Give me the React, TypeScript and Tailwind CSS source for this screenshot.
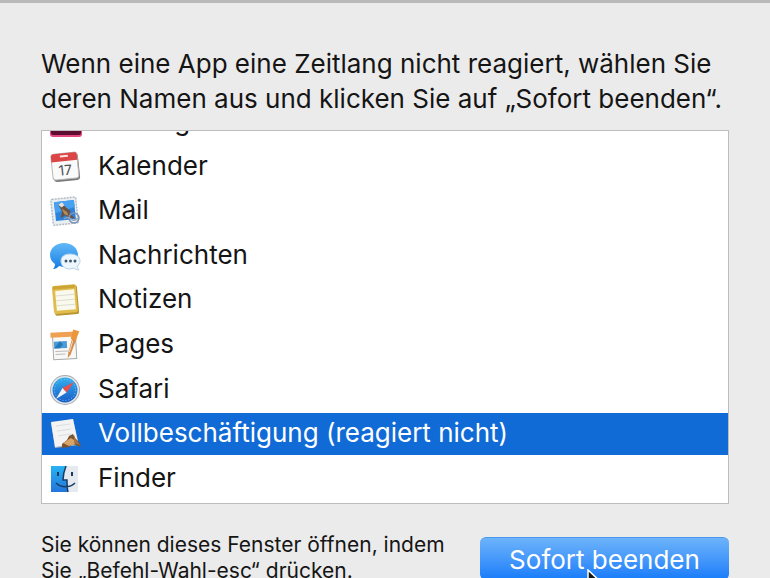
import { useState } from "react";
import type { ReactNode } from "react";

function InDesignIcon() {
  return (
    <svg viewBox="0 0 32 32" className="size-8" aria-hidden="true">
      <rect x="0" y="1" width="32" height="30" rx="3" fill="#e2487f" />
      <rect x="1" y="2" width="30" height="27" rx="2" fill="#5d0b30" />
    </svg>
  );
}

function CalendarIcon() {
  return (
    <svg viewBox="0 0 32 32" className="size-8" aria-hidden="true">
      <g transform="rotate(-6 16 16)">
        <rect x="3" y="3" width="26" height="27" rx="3" fill="#77777a" />
        <rect x="2" y="2" width="26" height="26" rx="3" fill="#fafafa" stroke="#b9b6b6" />
        <path d="M2 10V5q0-3 3-3h20q3 0 3 3v5z" fill="#dc4545" />
        <path d="M11 5h8" stroke="#ffe2df" strokeWidth="2" />
        <text x="15" y="24" textAnchor="middle" fontSize="14" fill="#4d4d52" fontFamily="Inter, sans-serif">17</text>
      </g>
    </svg>
  );
}

function MailIcon() {
  return (
    <svg viewBox="0 0 32 32" className="size-8" aria-hidden="true">
      <g transform="rotate(-6 16 16)">
        <rect x="2" y="3" width="25" height="26" rx="1" fill="#e9eef2" stroke="#b3bcc5" strokeWidth="1.500" strokeDasharray="2 1" />
        <rect x="5" y="6" width="20" height="19" fill="#2c83dc" />
        <path d="M5 6h20v7L5 17z" fill="#46a2f0" />
        <path d="M9 9l4-1 3 4 5 5-2 1 5 6h-5l-4-4-5 3 2-7z" fill="#6b513f" />
        <path d="M9 9l4-2 2 3-3 2z" fill="#e6e3dc" />
        <path d="M12 13l5 4 1 4-4-2z" fill="#b28a5b" />
      </g>
      <circle cx="24" cy="23" r="5" fill="none" stroke="#7b92b2" strokeWidth="1.500" />
      <path d="M14 24q4-3 7 0t7-1" fill="none" stroke="#8fa5c1" strokeWidth="1.500" />
    </svg>
  );
}

function MessagesIcon() {
  return (
    <svg viewBox="0 0 32 32" className="size-8" aria-hidden="true">
      <defs>
        <linearGradient id="bubble" x1="0" y1="0" x2="0" y2="1">
          <stop stopColor="#62b9f7" />
          <stop offset="1" stopColor="#147de4" />
        </linearGradient>
      </defs>
      <path d="M14 3C6 3 0 8 0 15c0 4 2 7 5 9 0 2-1 4-2 5 3 0 5-2 6-3l5 1c8 0 14-5 14-12S22 3 14 3z" fill="url(#bubble)" />
      <path d="M20 14c-6 0-9 3-9 7s3 8 9 8l4-1c1 1 3 2 5 2-1-1-2-3-2-4 2-1 3-3 3-5 0-4-4-7-10-7z" fill="#edf6fd" stroke="#b7d3e8" />
      <g fill="#40586d"><circle cx="16" cy="21" r="1.500" /><circle cx="20.500" cy="21" r="1.500" /><circle cx="25" cy="21" r="1.500" /></g>
    </svg>
  );
}

function NotesIcon() {
  return (
    <svg viewBox="0 0 32 32" className="size-8" aria-hidden="true">
      <g transform="rotate(-5 16 16)">
        <rect x="4" y="2" width="24" height="29" rx="2" fill="#b99531" />
        <rect x="3" y="1" width="24" height="28" rx="2" fill="#e0bd4d" />
        <path d="M6 6h19v20H6z" fill="#faf9ed" />
        <path d="M6 11h19M6 16h19M6 21h19" stroke="#dddcd0" />
        <path d="M4 3h22" stroke="#cda535" strokeWidth="3" />
      </g>
    </svg>
  );
}

function PagesIcon() {
  return (
    <svg viewBox="0 0 32 32" className="size-8" aria-hidden="true">
      <g transform="rotate(-3 16 16)">
        <rect x="3" y="4" width="23" height="26" fill="#f8f8f7" stroke="#aaa9a7" />
        <path d="M1 3h25v5H1z" fill="#f0a052" />
        <path d="M4 12h13v7H4z" fill="#4c9bd6" />
        <path d="M10 12l3 3-3 4H4z" fill="#2579b9" />
        <path d="M5 22h13M5 25h10" stroke="#b9bbbd" />
        <path d="M23 8l4 2-7 16-3 3 1-6z" fill="#d68c4b" />
        <path d="M24 1l6 2-4 9-5-2z" fill="#ec963b" />
        <path d="M23 12l-4 11" stroke="#f5dbb9" />
      </g>
    </svg>
  );
}

function SafariIcon() {
  return (
    <svg viewBox="0 0 32 32" className="size-8" aria-hidden="true">
      <defs>
        <linearGradient id="compass" x1="0" y1="0" x2="0" y2="1">
          <stop stopColor="#35b0ee" />
          <stop offset="1" stopColor="#165cc8" />
        </linearGradient>
      </defs>
      <circle cx="15" cy="16" r="15" fill="#a7acb2" />
      <circle cx="15" cy="16" r="14" fill="#e2e5e8" />
      <circle cx="15" cy="16" r="12.500" fill="url(#compass)" />
      <circle cx="15" cy="16" r="10.500" fill="none" stroke="#8ccbf3" strokeDasharray="1 2" />
      <path d="M24 8L12.500 14l4 4.500z" fill="#ed4f48" />
      <path d="M6 25l6.500-11 4 4.500z" fill="#f4f5f6" />
    </svg>
  );
}

function BusyAppIcon() {
  return (
    <svg viewBox="0 0 32 32" className="size-8" aria-hidden="true">
      <path d="M1 5l22-4 6 26-24 3z" fill="#abb5bb" />
      <path d="M1 4l22-3 5 24-23 4z" fill="#f2f3f2" />
      <path d="M6 8l14-2M7 13l14-2M8 18l13-2" stroke="#d9dfe1" />
      <path d="M12 26l5-4 2-4 4-2 2 4 4 4 2 5-8-3-4 3-7 1z" fill="#7b552f" />
      <path d="M13 25l8-5 3 2 1 4-6 2z" fill="#d7a468" />
      <path d="M24 17l2 5 4 5-6-2z" fill="#a97545" />
    </svg>
  );
}

function FinderIcon() {
  return (
    <svg viewBox="0 0 32 32" className="size-8" aria-hidden="true">
      <defs>
        <linearGradient id="finder-left" x1="0" y1="0" x2="0" y2="1">
          <stop stopColor="#27b3f2" />
          <stop offset="1" stopColor="#2375dc" />
        </linearGradient>
      </defs>
      <rect x="1" y="3" width="27" height="26" rx="1" fill="#e5eaf0" />
      <path d="M1 3h15c-2 5-3 9-3 14h4c0 4 0 8 1 12H1z" fill="url(#finder-left)" />
      <path d="M16 3c-2 5-3 9-3 14h4c0 4 0 8 1 12M6 20c5 5 14 5 19 0" fill="none" stroke="#193c64" strokeWidth="1.500" />
      <path d="M8 9v4M22 9v4" stroke="#183a5e" strokeWidth="2" />
    </svg>
  );
}

type AppEntry = { name: string; icon: ReactNode; status?: string };

const apps: AppEntry[] = [
  { name: "InDesign", icon: <InDesignIcon /> },
  { name: "Kalender", icon: <CalendarIcon /> },
  { name: "Mail", icon: <MailIcon /> },
  { name: "Nachrichten", icon: <MessagesIcon /> },
  { name: "Notizen", icon: <NotesIcon /> },
  { name: "Pages", icon: <PagesIcon /> },
  { name: "Safari", icon: <SafariIcon /> },
  { name: "Vollbeschäftigung", icon: <BusyAppIcon />, status: "reagiert nicht" },
  { name: "Finder", icon: <FinderIcon /> },
];

export default function App() {
  const [selected, setSelected] = useState("Vollbeschäftigung");

  return (
    <main className="h-screen overflow-hidden border-t-3 border-[#b9b9b9] bg-[#ebebeb] px-[41px] pt-[43px] font-['Inter','Liberation_Sans',sans-serif] text-[26px] text-[#151515]">
      <p id="prompt" className="leading-[35px]">
        Wenn eine App eine Zeitlang nicht reagiert, wählen Sie
        <br />
        deren Namen aus und klicken Sie auf „Sofort beenden“.
      </p>

      <fieldset aria-labelledby="prompt" className="mt-3.5 flex h-[374px] flex-col justify-end overflow-hidden border border-[#bdbdbd] bg-white pb-[3px]">
        <div className="grid h-[399px] shrink-0 auto-rows-fr gap-0.5">
          {apps.map((app) => (
            <label key={app.name} className="flex items-center gap-4 pl-2 leading-8 has-checked:bg-[#116bd6] has-checked:text-white">
              <input
                type="radio"
                name="app"
                value={app.name}
                checked={selected === app.name}
                onChange={() => setSelected(app.name)}
                className="sr-only"
              />
              {app.icon}
              <span className="pb-0.5">{app.status ? `${app.name} (${app.status})` : app.name}</span>
            </label>
          ))}
        </div>
      </fieldset>

      <footer className="mt-7 flex items-start justify-between gap-4">
        <p className="text-[21px] leading-[26px]">
          Sie können dieses Fenster öffnen, indem
          <br />
          Sie „Befehl-Wahl-esc“ drücken.
        </p>
        <div className="relative mt-[5px] shrink-0">
          <button type="button" className="h-[43px] w-[249px] rounded-md border-t border-[#4a99ee] bg-linear-to-b from-[#6cb3fa] to-[#147bfa] text-white">
            Sofort beenden
          </button>
          <svg viewBox="0 0 16 24" className="absolute top-8 left-[107px] h-6 w-4" aria-hidden="true">
            <path d="M1 1v19l5-4 3 7 4-2-3-6h6z" fill="#171717" stroke="#ffffff" strokeWidth="1.500" />
          </svg>
        </div>
      </footer>
    </main>
  );
}
